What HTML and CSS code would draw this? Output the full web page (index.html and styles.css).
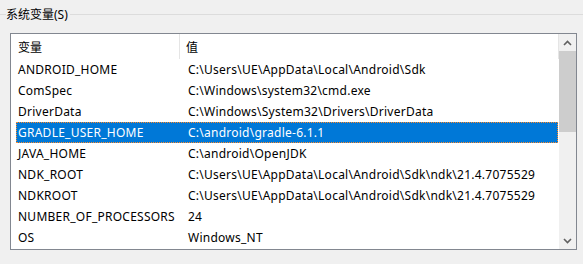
FILE: index.html
```html
<!DOCTYPE html>
<html lang="zh-CN">

<head>
    <meta charset="UTF-8">
    <title>系统变量</title>
    <link rel="stylesheet" href="styles.css">
</head>

<body>

    <div class="group-title">
        <span class="line line-left"></span>
        <span class="title">系统变量(S)</span>
        <span class="line line-right"></span>
    </div>

    <div class="listbox">
        <div class="list-content">
            <div class="list-header">
                <div class="head-cell head-name">变量</div>
                <div class="head-cell head-value">值</div>
            </div>
            <div class="row"><span class="cell-name">ANDROID_HOME</span><span class="cell-value">C:\Users\UE\AppData\Local\Android\Sdk</span></div>
            <div class="row"><span class="cell-name">ComSpec</span><span class="cell-value">C:\Windows\system32\cmd.exe</span></div>
            <div class="row"><span class="cell-name">DriverData</span><span class="cell-value">C:\Windows\System32\Drivers\DriverData</span></div>
            <div class="row selected"><span class="cell-name">GRADLE_USER_HOME</span><span class="cell-value">C:\android\gradle-6.1.1</span></div>
            <div class="row"><span class="cell-name">JAVA_HOME</span><span class="cell-value">C:\android\OpenJDK</span></div>
            <div class="row"><span class="cell-name">NDK_ROOT</span><span class="cell-value">C:\Users\UE\AppData\Local\Android\Sdk\ndk\21.4.7075529</span></div>
            <div class="row"><span class="cell-name">NDKROOT</span><span class="cell-value">C:\Users\UE\AppData\Local\Android\Sdk\ndk\21.4.7075529</span></div>
            <div class="row"><span class="cell-name">NUMBER_OF_PROCESSORS</span><span class="cell-value">24</span></div>
            <div class="row"><span class="cell-name">OS</span><span class="cell-value">Windows_NT</span></div>
        </div>
        <div class="scrollbar">
            <div class="arrow">
                <svg width="9" height="6" viewBox="0 0 9 6"><path d="M1 5 L4.5 1.5 L8 5" fill="none" stroke="#606060" stroke-width="1.6"/></svg>
            </div>
            <div class="thumb"></div>
            <div class="track"></div>
            <div class="arrow">
                <svg width="9" height="6" viewBox="0 0 9 6"><path d="M1 1 L4.5 4.5 L8 1" fill="none" stroke="#606060" stroke-width="1.6"/></svg>
            </div>
        </div>
    </div>

</body>

</html>
```

FILE: styles.css
```css
body {
    font-family: 'Noto Sans', 'Noto Sans CJK SC', sans-serif;
    font-size: 12px;
    background-color: #f0f0f0;
    color: #000;
    margin: 0;
    padding: 0;
}

.group-title {
    display: flex;
    align-items: center;
    height: 29px;
    margin-bottom: 4px;
}

.line {
    height: 1px;
    background-color: #dcdcdc;
}

.line-left {
    width: 6px;
}

.line-right {
    flex: 1;
    margin-left: 2px;
}

.title {
    line-height: 16px;
}

.listbox {
    display: flex;
    margin-left: 10px;
    width: 565px;
    height: 215px;
    border: 1px solid #828790;
    background-color: white;
    overflow: hidden;
}

.list-content {
    flex: 1;
    padding-left: 5px;
}

.list-header {
    display: flex;
    height: 25px;
    margin-left: -5px;
}

.head-cell {
    display: flex;
    align-items: center;
    border-right: 1px solid #e5e5e5;
    height: 25px;
}

.head-name {
    width: 161px;
    padding-left: 7px;
}

.head-value {
    flex: 1;
    padding-left: 6px;
}

.row {
    display: flex;
    align-items: center;
    width: 542px;
    height: 21px;
    box-sizing: border-box;
    border: 1px solid transparent;
    white-space: nowrap;
    letter-spacing: 0.25px;
}

.row.selected {
    background-color: #0078d7;
    color: white;
    border: 1px dotted #ff8a28;
}

.cell-name {
    width: 168px;
    padding-left: 1px;
}

.cell-value {
    padding-left: 2px;
}

.scrollbar {
    width: 17px;
    display: flex;
    flex-direction: column;
    background-color: #f0f0f0;
}

.arrow {
    height: 17px;
    display: flex;
    align-items: center;
    justify-content: center;
}

.thumb {
    height: 81px;
    background-color: #cdcdcd;
}

.track {
    flex: 1;
}
```
